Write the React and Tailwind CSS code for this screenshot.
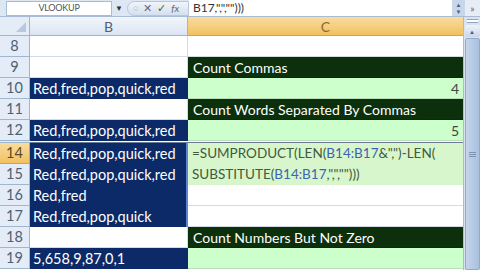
const font = { fontFamily: 'Lato, "Open Sans", sans-serif' }

const RowHead = ({ n, active }) => (
  <div
    className={`flex items-center justify-center border-b border-r text-[14.5px] ${
      active
        ? 'bg-gradient-to-b from-[#f9dc9f] to-[#f1c15f] border-[#c9a45c] text-[#5a4a2a]'
        : 'bg-[#e4ecf7] border-[#9eb6ce] text-[#4f5f72]'
    }`}
  >
    {n}
  </div>
)

const Navy = ({ children }) => (
  <div className="flex h-[21px] items-center bg-[#0d2a68] pl-[3px] text-[14.5px] text-white">{children}</div>
)

const White = () => <div className="border-b border-r border-[#d4dbe6] bg-white" />

const DarkGreen = ({ children }) => (
  <div className="flex items-center border-b border-[#0a2a0a] bg-[#0b300b] pl-[5px] text-[14px] text-white">
    {children}
  </div>
)

const LightGreen = ({ children }) => (
  <div className="flex items-center justify-end border-b border-[#b9dcb9] bg-[#ccffcc] pr-[4px] text-[14px] text-[#444]">
    {children}
  </div>
)

const Ref = ({ children }) => <span className="text-[#3c63b4]">{children}</span>

export default function App() {
  return (
    <div className="flex h-[270px] w-[480px] flex-col overflow-hidden bg-white" style={font}>
      {/* formula bar */}
      <div className="flex h-[17px] items-center border-b border-[#a9bcd6] bg-[#dde7f4]">
        <div className="ml-[6px] flex h-[15px] w-[106px] items-center justify-center border border-[#a9bcd6] bg-white text-[9px] tracking-tight text-[#555]">
          VLOOKUP
        </div>
        <div className="ml-[3px] text-[8px] text-[#333]">▼</div>
        <div className="ml-[4px] flex h-[15px] w-[62px] items-center gap-[5px] rounded-l-full border border-[#b7c6da] bg-gradient-to-b from-[#f1f5fb] to-[#d5dfee] pl-[5px] text-[11px] text-[#5b6b80]">
          <span className="text-[8px]">◌</span>
          <span>✕</span>
          <span className="text-[#3a6d3a]">✓</span>
          <span className="italic text-[10px]">fx</span>
        </div>
        <div className="flex h-[16px] flex-1 items-center bg-white pl-[4px] text-[12px] text-[#333]">B17,",","")))</div>
        <div className="flex h-[16px] w-[13px] flex-col items-center justify-center bg-[#c8d6ea] text-[6px] leading-[7px] text-[#4a5f80]">
          <span>▲</span>
          <span>▼</span>
        </div>
        <div className="flex h-[16px] w-[15px] items-center justify-center bg-[#e7edf6] text-[10px] text-[#4a5f80]">»</div>
      </div>

      <div className="flex flex-1">
        <div
          className="grid w-[463px] grid-cols-[30px_158px_275px]"
          style={{ gridTemplateRows: '19px 21px 21px 21px 21px 21px 2px 21px 21px 21px 21px 21px 21px' }}
        >
          {/* header row */}
          <div className="relative border-b border-r border-[#9eb6ce] bg-[#e4ecf7]">
            <div className="absolute bottom-[3px] right-[3px] h-0 w-0 border-b-[10px] border-l-[10px] border-b-[#b8c9dd] border-l-transparent" />
          </div>
          <div className="flex items-center justify-center border-b border-r border-[#9eb6ce] bg-gradient-to-b from-[#f2f6fb] to-[#dbe5f2] text-[14px] text-[#4f5f72]">
            B
          </div>
          <div className="flex items-center justify-center border-b border-[#c9a45c] bg-gradient-to-b from-[#f9dc9f] to-[#f1c15f] text-[14px] text-[#8a6a2a]">
            C
          </div>

          {/* row 8 */}
          <RowHead n={8} />
          <White />
          <div className="border-b border-[#d4dbe6] bg-white" />

          {/* row 9 */}
          <RowHead n={9} />
          <White />
          <DarkGreen>Count Commas</DarkGreen>

          {/* row 10 */}
          <RowHead n={10} />
          <Navy>Red,fred,pop,quick,red</Navy>
          <LightGreen>4</LightGreen>

          {/* row 11 */}
          <RowHead n={11} />
          <White />
          <DarkGreen>Count Words Separated By Commas</DarkGreen>

          {/* row 12 */}
          <RowHead n={12} />
          <Navy>Red,fred,pop,quick,red</Navy>
          <LightGreen>5</LightGreen>

          {/* hidden row 13 */}
          <div className="border-b border-[#9eb6ce] bg-[#e4ecf7]" />
          <div className="border-b border-[#6a7a90] bg-white" />
          <div className="border-b border-[#6a7a90] bg-white" />

          {/* rows 14-17 */}
          <RowHead n={14} active />
          <div className="row-span-4 flex flex-col overflow-hidden border-r-2 border-[#5b86d6] bg-[#0d2a68]">
            <Navy>Red,fred,pop,quick,red</Navy>
            <Navy>Red,fred,pop,quick,red</Navy>
            <Navy>Red,fred</Navy>
            <Navy>Red,fred,pop,quick</Navy>
          </div>
          <div className="row-span-2 flex flex-col justify-center gap-[4px] bg-[#d7f6cb] pl-[4px] text-[13.5px] leading-[17px] text-[#3f5a3f]">
            <div>
              =SUMPRODUCT(LEN(<Ref>B14:B17</Ref>&",")-LEN(
            </div>
            <div>
              SUBSTITUTE(<Ref>B14:B17</Ref>,",","")))
            </div>
          </div>

          <RowHead n={15} />
          <RowHead n={16} />
          <div className="border-b border-[#d4dbe6] bg-white" />
          <RowHead n={17} />
          <div className="border-b border-[#d4dbe6] bg-white" />

          {/* row 18 */}
          <RowHead n={18} />
          <White />
          <DarkGreen>Count Numbers But Not Zero</DarkGreen>

          {/* row 19 */}
          <RowHead n={19} />
          <Navy>5,658,9,87,0,1</Navy>
          <LightGreen />
        </div>

        {/* vertical scrollbar */}
        <div className="flex w-[17px] flex-col items-center border-l border-[#a9bcd6] bg-[#d9e3f0]">
          <div className="mt-[2px] h-[4px] w-[11px] border-y border-[#8ea4c2] bg-white" />
          <div className="mt-[2px] flex h-[12px] w-[15px] items-center justify-center rounded-[2px] bg-gradient-to-b from-[#eef3fa] to-[#c9d7ea] text-[6px] text-[#4a5f80]">
            ▲
          </div>
          <div className="mt-[1px] flex w-[15px] flex-1 flex-col items-center justify-center rounded-[2px] border border-[#93a9c7] bg-gradient-to-r from-[#c5d5ea] to-[#aac0de]">
            <div className="mb-[1px] h-[1px] w-[7px] bg-[#7d93b2]" />
            <div className="mb-[1px] h-[1px] w-[7px] bg-[#7d93b2]" />
            <div className="h-[1px] w-[7px] bg-[#7d93b2]" />
          </div>
        </div>
      </div>
    </div>
  )
}
